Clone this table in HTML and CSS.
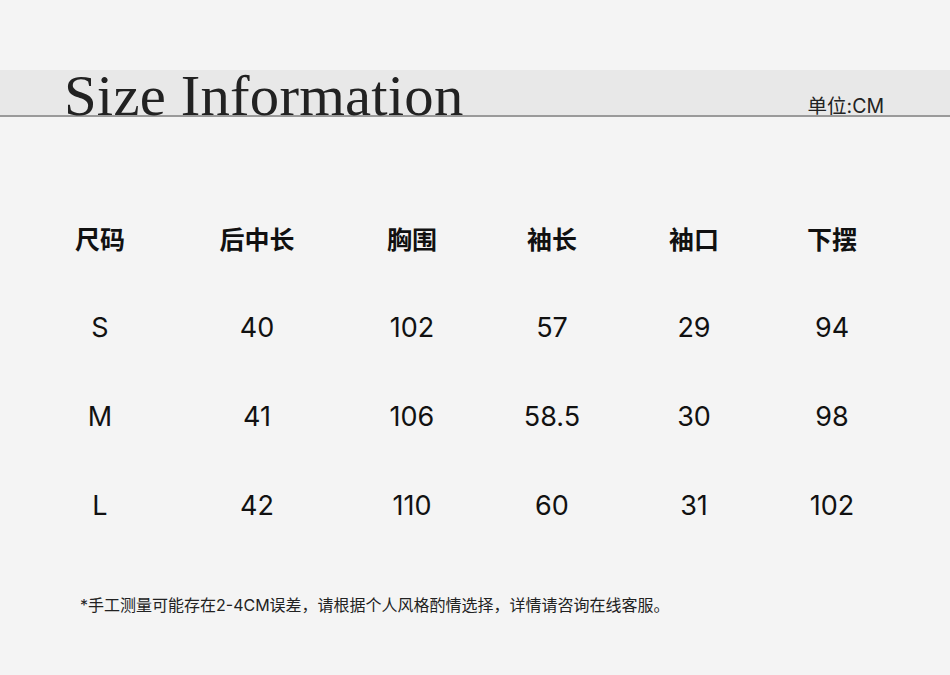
FILE: index.html
```html
<!DOCTYPE html>
<html lang="zh">
<head>
<meta charset="utf-8">
<link rel="stylesheet" href="styles.css">
</head>
<body>
<div class="page">
  <header class="band">
    <h1 class="title">Size Information</h1>
    <span class="unit">单位:CM</span>
  </header>
  <div class="table">
    <div class="cell head">尺码</div>
    <div class="cell head">后中长</div>
    <div class="cell head">胸围</div>
    <div class="cell head">袖长</div>
    <div class="cell head">袖口</div>
    <div class="cell head">下摆</div>

    <div class="cell">S</div>
    <div class="cell">40</div>
    <div class="cell">102</div>
    <div class="cell">57</div>
    <div class="cell">29</div>
    <div class="cell">94</div>

    <div class="cell">M</div>
    <div class="cell">41</div>
    <div class="cell">106</div>
    <div class="cell">58.5</div>
    <div class="cell">30</div>
    <div class="cell">98</div>

    <div class="cell">L</div>
    <div class="cell">42</div>
    <div class="cell">110</div>
    <div class="cell">60</div>
    <div class="cell">31</div>
    <div class="cell">102</div>
  </div>
  <p class="note">*手工测量可能存在2-4CM误差，请根据个人风格酌情选择，详情请咨询在线客服。</p>
</div>
</body>
</html>
```

FILE: styles.css
```css
html, body {
  margin: 0;
  padding: 0;
  background: #f4f4f4;
}
.page {
  width: 950px;
  height: 675px;
  background: #f4f4f4;
  padding-top: 70px;
  box-sizing: border-box;
  font-family: Inter, "Noto Sans CJK SC", sans-serif;
  color: #111;
}
.band {
  height: 45px;
  background: #e8e8e8;
  border-bottom: 2px solid #9a9a9a;
  display: flex;
  align-items: flex-end;
  justify-content: space-between;
  padding: 0 66px 0 64px;
  position: relative;
}
.title {
  margin: 0;
  font-family: "Liberation Serif", serif;
  font-weight: 400;
  font-size: 57px;
  line-height: 1;
  letter-spacing: 0.2px;
  color: #222;
  height: 45px;
  white-space: nowrap;
  position: relative;
  top: -3px;
  transform: scaleX(1.03);
  transform-origin: left center;
}
.unit {
  font-family: Inter, "Noto Sans CJK SC", sans-serif;
  font-size: 19.5px;
  line-height: 1;
  color: #222;
  position: relative;
  top: 1px;
}
.table {
  margin-top: 96px;
  margin-left: 30px;
  display: grid;
  grid-template-columns: 140px 174px 136px 144px 140px 136px;
  grid-auto-rows: 89px;
}
.cell {
  display: flex;
  align-items: center;
  justify-content: center;
  font-size: 27px;
  font-weight: 400;
  color: #111;
  height: 50px;
}
.cell.head {
  font-family: "Noto Sans CJK SC", sans-serif;
  font-weight: 700;
  font-size: 25px;
}
.note {
  margin: 23px 0 0 80px;
  font-family: Inter, "Noto Sans CJK SC", sans-serif;
  font-size: 16px;
  color: #222;
}
```
